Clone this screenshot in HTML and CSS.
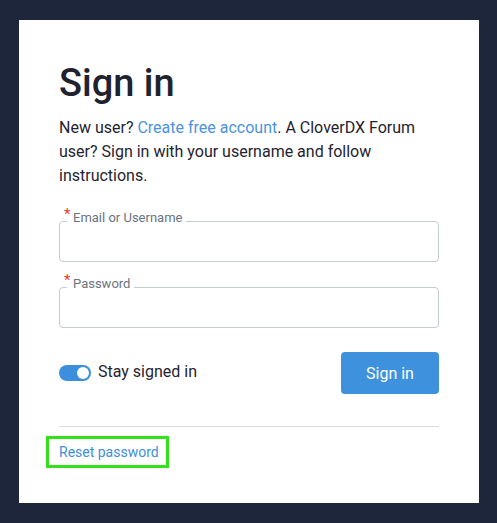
FILE: index.html
```html
<!DOCTYPE html>
<html lang="en">
<head>
<meta charset="utf-8">
<title>Sign in</title>
<link rel="stylesheet" href="styles.css">
</head>
<body>
<main class="card">
  <h1 class="title">Sign in</h1>
  <p class="intro">New user? <a class="link" href="#">Create free account</a>. A CloverDX Forum user? Sign in with your username and follow instructions.</p>
  <form class="form">
    <fieldset class="field">
      <legend class="legend"><span class="req">*</span>Email or Username</legend>
      <input class="input" type="text">
    </fieldset>
    <fieldset class="field">
      <legend class="legend"><span class="req">*</span>Password</legend>
      <input class="input" type="password">
    </fieldset>
    <div class="actions">
      <label class="toggle">
        <span class="switch"><span class="knob"></span></span>
        <span class="toggle-text">Stay signed in</span>
      </label>
      <button class="btn" type="button">Sign in</button>
    </div>
  </form>
  <hr class="divider">
  <a class="reset" href="#">Reset password</a>
</main>
</body>
</html>
```
FILE: styles.css
```css
* { box-sizing: border-box; }
html, body {
  margin: 0;
  padding: 0;
  background: #1e263b;
  font-family: Roboto, "Liberation Sans", sans-serif;
}
body { padding: 20px 18px 20px 19px; }
.card {
  width: 460px;
  background: #ffffff;
  padding: 40px 40px 35px 40px;
}
.title {
  margin: 0 0 10px 0;
  font-size: 38px;
  line-height: 46px;
  font-weight: 500;
  color: #1f2330;
}
.intro {
  margin: 0 0 25px 0;
  font-size: 16px;
  line-height: 24px;
  color: #1f2330;
}
.link {
  color: #4a93df;
  text-decoration: none;
}
.form {
  display: flex;
  flex-direction: column;
}
.field {
  margin: 0 0 17px 0;
  padding: 0;
  border: 1px solid #c5cbd4;
  border-radius: 4px;
  min-width: 0;
}
.field:nth-of-type(2) { margin-bottom: 24px; }
.legend {
  position: relative;
  top: -3px;
  margin-left: 7px;
  padding: 0 4px 0 6px;
  font-size: 13px;
  line-height: 16px;
  color: #6b7380;
}
.req {
  position: absolute;
  left: -3px;
  top: -4px;
  color: #ef3b32;
  font-size: 15px;
}
.input {
  display: block;
  width: 100%;
  height: 32px;
  border: none;
  outline: none;
  background: transparent;
  padding: 0 12px;
  font-size: 16px;
  font-family: inherit;
}
.actions {
  display: flex;
  justify-content: space-between;
  align-items: center;
}
.toggle {
  display: flex;
  align-items: center;
  gap: 7px;
  cursor: pointer;
}
.switch {
  display: flex;
  align-items: center;
  justify-content: flex-end;
  width: 32px;
  height: 16px;
  border-radius: 8px;
  background: #3b8fdc;
  padding: 0 2px;
}
.knob {
  width: 12px;
  height: 12px;
  border-radius: 50%;
  background: #ffffff;
}
.toggle-text {
  font-size: 16px;
  line-height: 20px;
  margin-top: -2px;
  color: #1f2330;
}
.btn {
  width: 98px;
  height: 42px;
  border: none;
  border-radius: 4px;
  background: #3d91dd;
  color: #ffffff;
  font-family: inherit;
  font-size: 16px;
  cursor: pointer;
}
.divider {
  margin: 32px 0 0 0;
  border: none;
  border-top: 1px solid #d9dbe2;
  height: 0;
}
.reset {
  display: inline-block;
  margin: 9px 0 0 -13px;
  padding: 3px 7px 3px 10px;
  border: 3px solid #33e01c;
  font-size: 14px;
  line-height: 20px;
  color: #3d8fdc;
  text-decoration: none;
}
```
